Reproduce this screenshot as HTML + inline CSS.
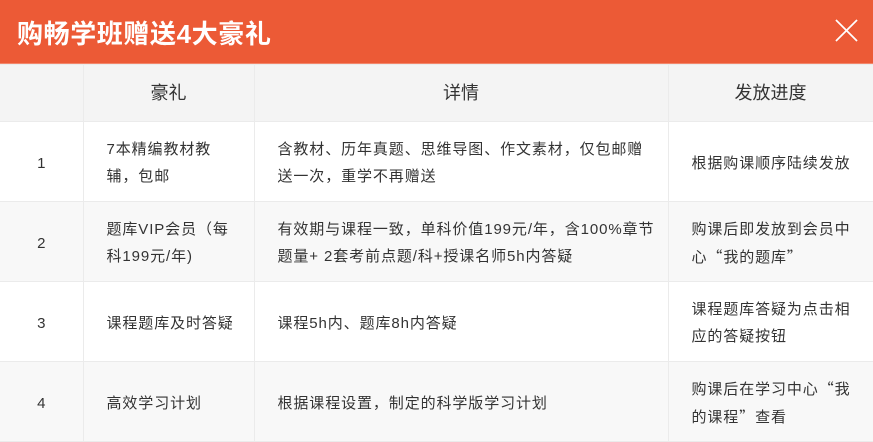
<!DOCTYPE html><html><head><meta charset="utf-8"><style>
*{margin:0;padding:0;box-sizing:border-box}
body{width:873px;height:442px;overflow:hidden;background:#fff;font-family:"Liberation Sans","Noto Sans CJK SC",sans-serif;color:#333}
.top{height:64px;background:#ec5a36;position:relative;border-bottom:1px solid #f2866a}
.top h1{position:absolute;left:17px;top:14px;font-size:26px;color:#fff;font-weight:bold;letter-spacing:0.6px}
.x{position:absolute;right:15px;top:19px;width:23px;height:23px}
table{border-collapse:collapse;width:873px;table-layout:fixed}
td,th{border:1px solid #ebebeb;font-size:15px;letter-spacing:0.9px;line-height:27px;vertical-align:middle;text-align:left;padding:3px 0 0 23px;white-space:nowrap}
th{height:57px;background:#f4f4f4;font-weight:normal;font-size:18px;letter-spacing:0;text-align:center;color:#333;padding:0}
td{height:80px}
td:first-child{text-align:center;padding:3px 0 0 0;letter-spacing:0}
tr.g td{background:#f8f8f8}
tr td:first-child,tr th:first-child{border-left:none}
.q{font-family:"Noto Sans CJK SC",sans-serif}
</style></head><body>
<div class="top"><h1>购畅学班赠送4大豪礼</h1>
<svg class="x" viewBox="0 0 24 24"><path d="M1 1L23 23M23 1L1 23" stroke="#fff" stroke-width="1.8" fill="none"/></svg></div>
<table>
<colgroup><col style="width:83px"><col style="width:171px"><col style="width:414px"><col style="width:205px"></colgroup>
<tr><th></th><th>豪礼</th><th>详情</th><th>发放进度</th></tr>
<tr><td>1</td><td>7本精编教材教<br>辅，包邮</td><td>含教材、历年真题、思维导图、作文素材，仅包邮赠<br>送一次，重学不再赠送</td><td>根据购课顺序陆续发放</td></tr>
<tr class="g"><td>2</td><td>题库VIP会员（每<br>科199元/年)</td><td>有效期与课程一致，单科价值199元/年，含100%章节<br>题量+ 2套考前点题/科+授课名师5h内答疑</td><td>购课后即发放到会员中<br>心<span class="q">“</span>我的题库<span class="q">”</span></td></tr>
<tr><td>3</td><td>课程题库及时答疑</td><td>课程5h内、题库8h内答疑</td><td>课程题库答疑为点击相<br>应的答疑按钮</td></tr>
<tr class="g"><td>4</td><td>高效学习计划</td><td>根据课程设置，制定的科学版学习计划</td><td>购课后在学习中心<span class="q">“</span>我<br>的课程<span class="q">”</span>查看</td></tr>
</table>
</body></html>
